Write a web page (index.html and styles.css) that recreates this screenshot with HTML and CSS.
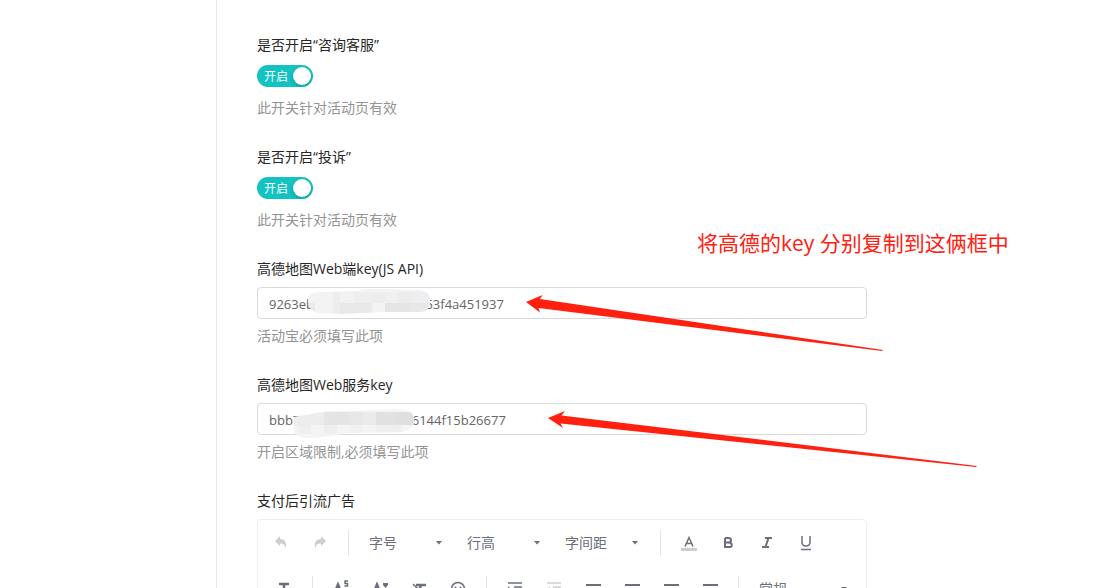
FILE: index.html
```
<!DOCTYPE html>
<html lang="zh-CN">
<head>
    <meta charset="UTF-8">
    <meta name="viewport" content="width=device-width, initial-scale=1.0">
    <title>活动设置</title>
    <link rel="stylesheet" href="styles.css">
</head>
<body>
    <aside class="sidebar"></aside>

    <main class="content">
        <form class="settings">
            <div class="field">
                <label class="field-label" for="service">是否开启“咨询客服”</label>
                <div class="switch">
                    <input type="checkbox" role="switch" id="service" checked>
                    <span class="switch-text">开启</span>
                </div>
                <p class="help">此开关针对活动页有效</p>
            </div>

            <div class="field">
                <label class="field-label" for="complaint">是否开启“投诉”</label>
                <div class="switch">
                    <input type="checkbox" role="switch" id="complaint" checked>
                    <span class="switch-text">开启</span>
                </div>
                <p class="help">此开关针对活动页有效</p>
            </div>

            <div class="field">
                <label class="field-label" for="js-key">高德地图Web端key(JS API)</label>
                <div class="key-box">
                    <input class="key-input" type="text" id="js-key" value="9263eb&#160;&#160;&#160;&#160;&#160;&#160;&#160;&#160;&#160;&#160;&#160;&#160;&#160;&#160;&#160;&#160;&#160;&#160;&#160;&#160;&#160;&#160;&#160;&#160;&#160;&#160;&#160;&#160;&#160;&#160;&#160;&#160;&#160;53f4a451937">
                    <svg class="mask mask-js" width="126" height="28" viewBox="0 0 126 28" aria-hidden="true">
                        <clipPath id="mask-js"><path d="M1 12 Q2 4 12 4 L50 3 Q58 0 68 1 L112 2 Q123 3 123 12 V15 Q122 24 112 24 L78 24 L32 26 L12 25 Q2 23 1 14Z"/></clipPath>
                        <g clip-path="url(#mask-js)">
                            <rect width="126" height="28" fill="#f3f3f4"/>
                            <rect x="26" y="4" width="7" height="22" fill="#ededee"/>
                            <rect x="33" y="4" width="14" height="11" fill="#f1f2f2"/>
                            <rect x="47" y="4" width="19" height="11" fill="#eeeeef"/>
                            <rect x="66" y="4" width="12" height="11" fill="#ececed"/>
                            <rect x="78" y="4" width="13" height="11" fill="#f0f0f0"/>
                            <rect x="91" y="4" width="13" height="11" fill="#ececec"/>
                            <rect x="104" y="4" width="20" height="11" fill="#eeeef0"/>
                            <rect y="15" width="8" height="11" fill="#e9ebed"/>
                            <rect x="33" y="15" width="32" height="11" fill="#e9e9ea"/>
                            <rect x="78" y="15" width="25" height="11" fill="#e5e5e6"/>
                            <rect x="103" y="15" width="23" height="11" fill="#e8e8e9"/>
                        </g>
                    </svg>
                    <svg class="arrow arrow-js" width="358" height="58" viewBox="0 0 358 58" aria-hidden="true">
                        <path d="M0 9 L16.500 2 L14 6 L357 57 L356 58 L12.500 15 L14 19.500Z"/>
                    </svg>
                </div>
                <p class="help">活动宝必须填写此项</p>
                <p class="note">将高德的key 分别复制到这俩框中</p>
            </div>

            <div class="field">
                <label class="field-label" for="web-key">高德地图Web服务key</label>
                <div class="key-box">
                    <input class="key-input" type="text" id="web-key" value="bbb7&#160;&#160;&#160;&#160;&#160;&#160;&#160;&#160;&#160;&#160;&#160;&#160;&#160;&#160;&#160;&#160;&#160;&#160;&#160;&#160;&#160;&#160;&#160;&#160;&#160;&#160;&#160;&#160;&#160;&#160;&#160;&#160;&#160;6144f15b26677">
                    <svg class="mask mask-web" width="124" height="32" viewBox="0 0 124 32" aria-hidden="true">
                        <clipPath id="mask-web"><path d="M2 9 Q14 7 34 3 L90 2 Q108 0 116 3 Q123 6 122 15 Q120 22 110 24 L60 25 L22 30 Q3 31 1 21Z"/></clipPath>
                        <g clip-path="url(#mask-web)">
                            <rect width="124" height="32" fill="#f4f4f4"/>
                            <rect y="5" width="32" height="12" fill="#ecedee"/>
                            <rect x="32" y="4" width="26" height="13" fill="#e2e4e5"/>
                            <rect x="58" y="4" width="12" height="13" fill="#e7e7e8"/>
                            <rect x="70" y="4" width="14" height="13" fill="#ebebec"/>
                            <rect x="84" y="4" width="20" height="13" fill="#e0e1e2"/>
                            <rect x="104" y="4" width="20" height="13" fill="#dfdfdf"/>
                            <rect x="6" y="17" width="13" height="9" fill="#efeff0"/>
                            <rect x="32" y="17" width="13" height="9" fill="#eeeeef"/>
                            <rect x="58" y="17" width="13" height="9" fill="#f1f1f1"/>
                            <rect x="84" y="17" width="26" height="9" fill="#efefef"/>
                        </g>
                    </svg>
                    <svg class="arrow arrow-web" width="430" height="58" viewBox="0 0 430 58" aria-hidden="true">
                        <path d="M0 9 L17 2 L13.500 6.500 L429 57 L428 58 L12.500 14.500 L15 19Z"/>
                    </svg>
                </div>
                <p class="help">开启区域限制,必须填写此项</p>
            </div>

            <div class="field">
                <span class="field-label">支付后引流广告</span>
                <div class="editor">
                    <div class="toolbar">
                        <button type="button" class="tool disabled" aria-label="撤销">
                            <svg width="18" height="18" viewBox="0 0 18 18"><path d="M3 7 L8 2 V5 C13 5 15.500 9 13.500 15 C13.500 11 11.500 9.500 8 9.500 V12Z"/></svg>
                        </button>
                        <button type="button" class="tool disabled" aria-label="重做">
                            <svg width="18" height="18" viewBox="0 0 18 18"><path d="M15 7 L10 2 V5 C5 5 2.500 9 4.500 15 C4.500 11 6.500 9.500 10 9.500 V12Z"/></svg>
                        </button>
                        <span class="divider"></span>
                        <div class="picker">
                            <select aria-label="字号"><option>字号</option></select>
                            <svg class="caret" width="8" height="4" viewBox="0 0 8 4"><path d="M1 0H7L4 3.500Z"/></svg>
                        </div>
                        <div class="picker">
                            <select aria-label="行高"><option>行高</option></select>
                            <svg class="caret" width="8" height="4" viewBox="0 0 8 4"><path d="M1 0H7L4 3.500Z"/></svg>
                        </div>
                        <div class="picker">
                            <select aria-label="字间距"><option>字间距</option></select>
                            <svg class="caret" width="8" height="4" viewBox="0 0 8 4"><path d="M1 0H7L4 3.500Z"/></svg>
                        </div>
                        <span class="divider"></span>
                        <button type="button" class="tool" aria-label="文字颜色">
                            <svg width="18" height="18" viewBox="0 0 18 18"><path class="line thin" d="M5 12.500 L9 3.500 L13 12.500 M6.500 9.500 H11.500"/><path class="pale" d="M1 14H17V17H1Z"/></svg>
                        </button>
                        <button type="button" class="tool" aria-label="加粗">
                            <svg width="18" height="18" viewBox="0 0 18 18"><path class="line" d="M6 4 H9.500 Q12 4 12 6.200 T9.500 8.500 H6 M9.500 8.500 Q12.800 8.500 12.800 11 T10 13 H6 V4"/></svg>
                        </button>
                        <button type="button" class="tool" aria-label="斜体">
                            <svg width="18" height="18" viewBox="0 0 18 18"><path class="line" d="M7 4 H14 M4 13 H11 M10.500 4 L7.500 13"/></svg>
                        </button>
                        <button type="button" class="tool" aria-label="下划线">
                            <svg width="18" height="18" viewBox="0 0 18 18"><path class="line thin" d="M5 2 V8 Q5 12 9 12 T13 8 V2 M4 15.500 H14"/></svg>
                        </button>
                    </div>

                    <div class="toolbar toolbar-second">
                        <button type="button" class="tool" aria-label="清除格式">
                            <svg width="18" height="18" viewBox="0 0 18 18"><path class="line bold" d="M4 4H14 M9 4V14"/></svg>
                        </button>
                        <span class="divider"></span>
                        <button type="button" class="tool" aria-label="上标">
                            <svg width="18" height="18" viewBox="0 0 18 18"><path class="line bold" d="M2 14 L6 4.500 L10 14 M4 11H8"/><path class="line small" d="M16 1 H13 V3.500 H15.500 V6 H12.500"/></svg>
                        </button>
                        <button type="button" class="tool" aria-label="字体大小">
                            <svg width="18" height="18" viewBox="0 0 18 18"><path class="line bold" d="M2 14 L6 4.500 L10 14 M4 11H8"/><path d="M12 3H17V5L14.500 8L12 5Z"/></svg>
                        </button>
                        <button type="button" class="tool" aria-label="清除样式">
                            <svg width="18" height="18" viewBox="0 0 18 18"><path class="line bold" d="M6 5H16 M11 5L8 14"/><path class="line thin" d="M3 4L13 14"/></svg>
                        </button>
                        <button type="button" class="tool" aria-label="表情">
                            <svg width="18" height="18" viewBox="0 0 18 18"><circle class="line thin" cx="9" cy="9" r="6.500"/><circle cx="6.500" cy="7.500" r="1"/><circle cx="11.500" cy="7.500" r="1"/><path class="line" d="M6 11Q9 14 12 11"/></svg>
                        </button>
                        <span class="divider"></span>
                        <button type="button" class="tool" aria-label="增加缩进">
                            <svg width="18" height="18" viewBox="0 0 18 18"><path class="line thin" d="M2 3H16 M8 7H16 M8 11H16 M2 15H16"/><path d="M2 6L5 9L2 12Z"/></svg>
                        </button>
                        <button type="button" class="tool disabled" aria-label="减少缩进">
                            <svg width="18" height="18" viewBox="0 0 18 18"><path class="line thin" d="M2 3H16 M8 7H16 M8 11H16 M2 15H16"/><path d="M5 6L2 9L5 12Z"/></svg>
                        </button>
                        <button type="button" class="tool" aria-label="左对齐">
                            <svg width="18" height="18" viewBox="0 0 18 18"><path class="line" d="M2 5H17 M2 9H12 M2 13H17"/></svg>
                        </button>
                        <button type="button" class="tool" aria-label="居中">
                            <svg width="18" height="18" viewBox="0 0 18 18"><path class="line" d="M2 5H17 M5 9H14 M2 13H17"/></svg>
                        </button>
                        <button type="button" class="tool" aria-label="右对齐">
                            <svg width="18" height="18" viewBox="0 0 18 18"><path class="line" d="M2 5H17 M7 9H17 M2 13H17"/></svg>
                        </button>
                        <button type="button" class="tool" aria-label="两端对齐">
                            <svg width="18" height="18" viewBox="0 0 18 18"><path class="line" d="M2 5H17 M2 9H17 M2 13H17"/></svg>
                        </button>
                        <span class="divider"></span>
                        <div class="picker picker-wide">
                            <select aria-label="段落格式"><option>常规</option></select>
                            <svg class="caret" width="8" height="4" viewBox="0 0 8 4"><path d="M1 0H7L4 3.500Z"/></svg>
                        </div>
                    </div>
                </div>
            </div>
        </form>
    </main>
</body>
</html>
```
FILE: styles.css
```
* {
    box-sizing: border-box;
}
body {
    display: flex;
    height: 100vh;
    margin: 0;
    overflow: hidden;
    background: #fff;
    color: #262626;
    font-family: "Open Sans", "Noto Sans CJK SC", sans-serif;
    font-size: 14px;
    line-height: 22px;
}
.sidebar {
    flex: 0 0 217px;
    border-right: 1px solid #e8e8e8;
}
.content {
    flex: 1;
    padding: 34px 40px 0;
}
.settings {
    max-width: 610px;
}

/* Form fields */
.field {
    position: relative;
    margin-bottom: 27px;
}
.field-label {
    display: block;
    margin-bottom: 7px;
}
.help {
    margin: 6px 0 0;
    color: #949494;
}

/* Switch */
.switch {
    display: grid;
    width: 56px;
    padding: 2px 0 4px;
}
.switch input,
.switch-text {
    grid-area: 1 / 1;
}
.switch input {
    appearance: none;
    display: flex;
    justify-content: flex-end;
    width: 56px;
    height: 22px;
    margin: 0;
    padding: 2px;
    border-radius: 11px;
    background: #13c2c2;
    cursor: pointer;
}
.switch input::before {
    content: "";
    width: 18px;
    height: 18px;
    border-radius: 50%;
    background: #fff;
    box-shadow: 0 2px 4px rgba(0, 35, 11, 0.2);
}
.switch-text {
    padding: 1px 0 0 7px;
    color: #fff;
    font-size: 12px;
    line-height: 21px;
    pointer-events: none;
}

/* Key inputs */
.key-box {
    position: relative;
}
.key-input {
    display: block;
    width: 100%;
    height: 32px;
    padding: 5px 11px 4px;
    border: 1px solid #d9d9d9;
    border-radius: 4px;
    background: #fff;
    color: #666;
    font-family: inherit;
    font-size: 13px;
}
.mask,
.arrow,
.note {
    position: absolute;
    pointer-events: none;
}
.mask-js {
    top: 1px;
    left: 50px;
}
.mask-web {
    top: 5px;
    left: 35px;
}
.arrow {
    fill: #ff2010;
}
.arrow-js {
    top: 6px;
    left: 269px;
}
.arrow-web {
    top: 6px;
    left: 291px;
}
.note {
    top: -30px;
    left: 440px;
    margin: 0;
    color: #ff2010;
    font-size: 21px;
    line-height: 30px;
    white-space: nowrap;
}

/* Editor */
.editor {
    border: 1px solid #eee;
    border-radius: 4px;
}
.toolbar {
    display: flex;
    align-items: center;
    height: 46px;
    padding-left: 3px;
}
.toolbar-second {
    padding-left: 6px;
}
.tool {
    display: flex;
    align-items: center;
    justify-content: center;
    width: 39px;
    height: 32px;
    padding: 0;
    border: 0;
    background: none;
    color: #6a6f7b;
    cursor: pointer;
}
.tool.disabled {
    color: #cdced2;
}
.tool svg,
.caret {
    fill: currentColor;
}
.tool .line {
    fill: none;
    stroke: currentColor;
    stroke-width: 2;
}
.tool .bold {
    stroke-width: 2.5;
}
.tool .thin,
.tool .small {
    stroke-width: 1.5;
}
.tool .pale {
    fill: #cdced2;
}
.divider {
    width: 1px;
    height: 26px;
    margin: 0 8px 0 9px;
    background: #e3e4e7;
}
.picker {
    display: grid;
    align-items: center;
    width: 98px;
    color: #6a6f7b;
}
.picker select {
    grid-area: 1 / 1;
    appearance: none;
    width: 100%;
    height: 32px;
    padding: 0 12px 2px;
    border: 0;
    background: none;
    color: inherit;
    font-family: inherit;
    font-size: 14px;
}
.caret {
    grid-area: 1 / 1;
    justify-self: end;
    margin-right: 12px;
    pointer-events: none;
}
.picker-wide {
    width: 113px;
}
```
